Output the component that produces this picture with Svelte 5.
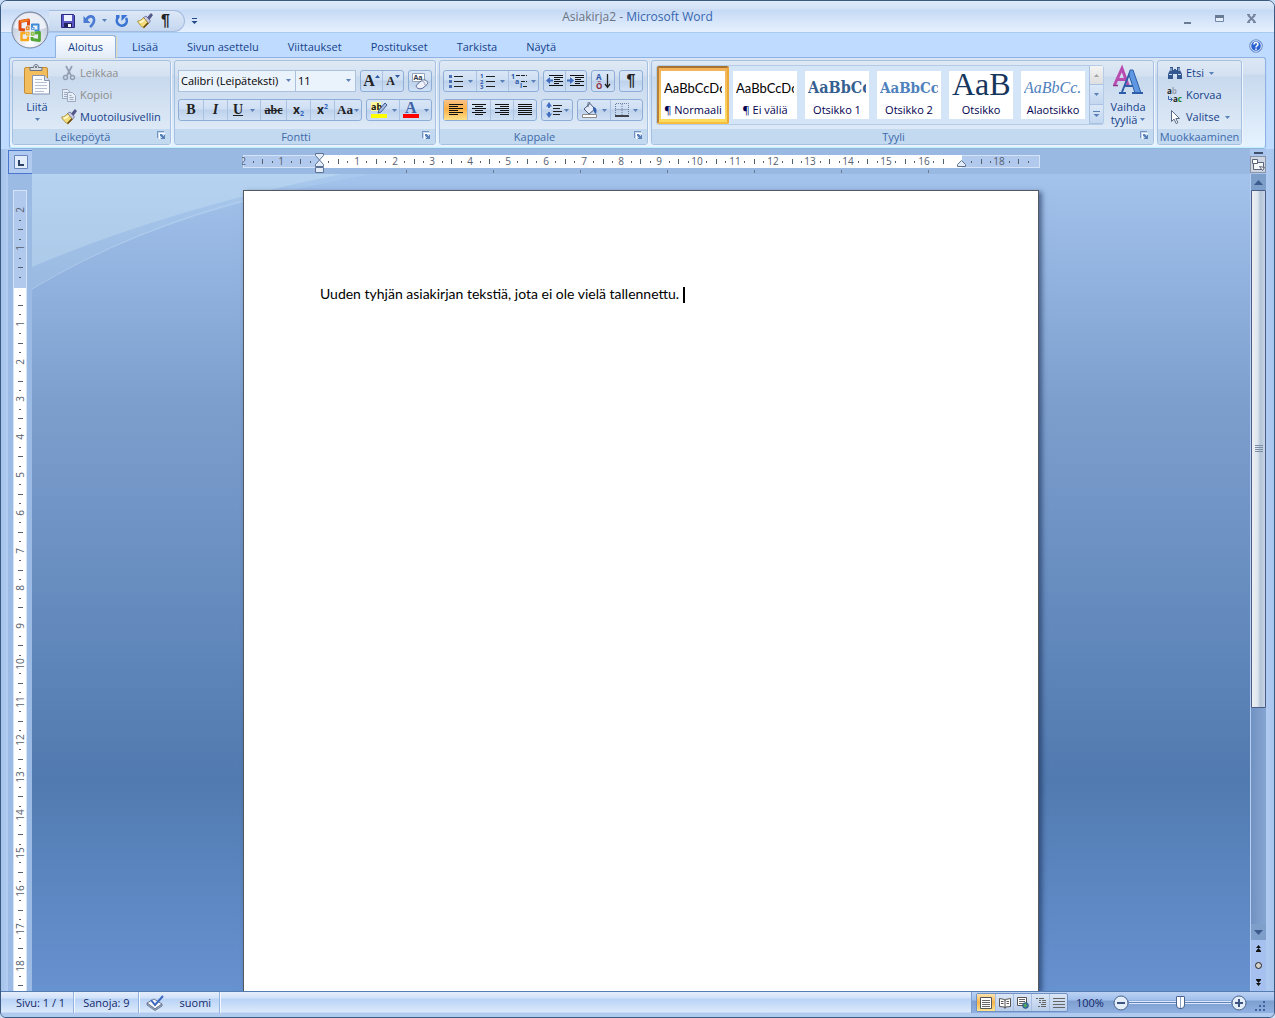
<script lang="ts">
	/**
	 * Word processor window
	 *
	 * Title bar, ribbon, rulers, document page and status bar.
	 * The page and the horizontal ruler stay centred in the workspace.
	 */

	interface Style {
		name: string;
		sample: string;
		kind: string;
	}

	// Constants
	const CM = 37.8; // one centimetre at 96 dpi
	const RULER_START = 77; // left margin on the horizontal ruler
	const RULER_TOP = 96; // top margin on the vertical ruler
	const TAB_STOP = 87;

	const tabs = ["Aloitus", "Lisää", "Sivun asettelu", "Viittaukset", "Postitukset", "Tarkista", "Näytä"];

	const styles: Style[] = [
		{ name: "¶ Normaali", sample: "AaBbCcDc", kind: "plain" },
		{ name: "¶ Ei väliä", sample: "AaBbCcDc", kind: "plain" },
		{ name: "Otsikko 1", sample: "AaBbCc", kind: "h1" },
		{ name: "Otsikko 2", sample: "AaBbCc", kind: "h2" },
		{ name: "Otsikko", sample: "AaB", kind: "title" },
		{ name: "Alaotsikko", sample: "AaBbCc.", kind: "subtitle" },
	];

	const views = ["print", "reading", "web", "outline", "draft"];

	// State
	let activeTab = $state("Aloitus");
	let activeStyle = $state("¶ Normaali");
	let activeView = $state("print");
	let align = $state("left");
	let zoom = $state(100);

	/**
	 * Quarter marks between two ruler positions, in centimetres
	 */
	function marks(from: number, to: number) {
		const list: { at: number; type: string }[] = [];
		for (let q = from * 4; q <= to * 4; q++) {
			if (q === 0) continue;
			const type = q % 4 === 0 ? "number" : q % 2 === 0 ? "half" : "dot";
			list.push({ at: q / 4, type });
		}
		return list;
	}

	const acrossMarks = marks(-2, 18.75).filter((m) => m.at < 16.75 || m.at > 17);
	const downMarks = marks(-2, 30);
	const tabStops = [1, 2, 3, 4, 5, 6, 7];
</script>

{#snippet caret()}
	<svg class="caret" width="5" height="3" viewBox="0 0 5 3"><path d="M0 0h5L2.500 3z" fill="#5a80b8" /></svg>
{/snippet}

{#snippet lines(rows: number[][])}
	<svg width="16" height="16" viewBox="0 0 16 16" shape-rendering="crispEdges">
		{#each rows as [x, w], i}
			<rect {x} y={2 + i * 2} width={w} height="1" fill="#111" />
		{/each}
	</svg>
{/snippet}

{#snippet launcher()}
	<button class="launcher" aria-label="Lisää asetuksia">
		<svg width="9" height="9" viewBox="0 0 9 9" shape-rendering="crispEdges">
			<path d="M2 8V2h6" fill="none" stroke="#fff" />
			<path d="M0 7V0h7v1H1v6z" fill="#7594c0" />
			<path d="M3 3h2v1h1v1h1V4h1v4H4V7h1V6H4V5H3z" fill="#5b80b5" />
		</svg>
	</button>
{/snippet}

{#snippet brush()}
	<svg width="16" height="16" viewBox="0 0 16 16">
		<path d="M10 5l4-4.500 1.500 1.500L12 7z" fill="#57598f" stroke="#2f3163" stroke-width=".6" />
		<path d="M6.500 4.500L9 3l4.500 5-2 2.500z" fill="#c9cbe4" stroke="#55588c" stroke-width=".7" />
		<path d="M6.500 4.500L11.500 10.500 7 15C4 13.500 2 11 .5 8 3 8 5 6.500 6.500 4.500z" fill="#f3dd7b" stroke="#9a7c22" stroke-width=".7" />
		<path d="M2 8.500c2 0 4-1 5-2.500l1 1C7 9 5 10 3 10z" fill="#fffbd4" />
		<path d="M7 15l4.500-4.500-1-1.200L6 14z" fill="#6b4b14" />
	</svg>
{/snippet}

<div class="window">
	<header class="titlebar">
		<button class="office" aria-label="Office-painike">
			<svg width="38" height="38" viewBox="0 0 38 38">
				<defs>
					<radialGradient id="orb" cx=".5" cy=".85" r=".9">
						<stop offset="0" stop-color="#fff" />
						<stop offset=".5" stop-color="#d4dbe8" />
						<stop offset="1" stop-color="#a9b3c6" />
					</radialGradient>
				</defs>
				<circle cx="19" cy="19" r="18" fill="url(#orb)" stroke="#76829a" />
				<path d="M3 17a16 15 0 0 1 32 0q-16 5-32 0z" fill="#f4f6fb" opacity=".85" />
				<g fill="none" stroke-linejoin="round">
					<path d="M17.500 14.500V9l-8.500 1.500v8l5 .5" stroke="#de4b12" stroke-width="3" />
					<path d="M9 10.500L17.500 9" stroke="#f08221" stroke-width="2" />
					<path d="M21 16v-2.500h6.500v6h-4" stroke="#3f8ad2" stroke-width="2" />
					<path d="M14.500 22h-4v7h6.500v-3.500" stroke="#f8a81c" stroke-width="2.400" />
					<path d="M24 22l4.500-.5v8L21 28.500V26" stroke="#55a735" stroke-width="2.800" />
					<path d="M15.500 16h2.500v2.500h-2.500z" stroke="#e98a2a" stroke-width="1.400" />
					<path d="M20.500 16.500H23v2h-2.500z" stroke="#5aa0de" stroke-width="1.200" />
					<path d="M15.500 21.500H18V24h-2.500z" stroke="#f5b93c" stroke-width="1.400" />
					<path d="M20.500 21.500H23V24h-2.500z" stroke="#8dc04a" stroke-width="1.400" />
				</g>
			</svg>
		</button>
		<div class="quick">
			<button aria-label="Tallenna">
				<svg width="14" height="14" viewBox="0 0 14 14">
					<path d="M.5.5h12l1 1v12H.5z" fill="#5a57c4" stroke="#2c2a80" />
					<rect x="3" y="1" width="8" height="6" fill="#eef2fc" />
					<rect x="3" y="9" width="8" height="4.500" fill="#23235c" />
					<rect x="7" y="10" width="3" height="3" fill="#fff" />
				</svg>
			</button>
			<button class="split" aria-label="Kumoa">
				<svg width="14" height="14" viewBox="0 0 14 14">
					<path d="M3 6.500C5 1.500 10 1 11 5c.6 3-1 5.500-4 8" fill="none" stroke="#4a7ad2" stroke-width="2.600" />
					<path d="M.5 2v7H7.500z" fill="#4a7ad2" />
				</svg>
				{@render caret()}
			</button>
			<button aria-label="Toista">
				<svg width="14" height="14" viewBox="0 0 14 14">
					<path d="M3 3.500a5 5 0 1 0 8 .5" fill="none" stroke="#3974d4" stroke-width="2.600" />
					<path d="M6.500 7V1H12.500z" fill="#3974d4" />
					<path d="M1 1h3.500v3H1z" fill="#3974d4" />
				</svg>
			</button>
			<button aria-label="Muotoilusivellin">{@render brush()}</button>
			<button class="pilcrow" aria-label="Näytä kaikki">¶</button>
		</div>
		<button class="customize" aria-label="Mukauta pikatyökaluriviä">
			<svg width="7" height="6" viewBox="0 0 7 6"><path d="M1 0h5v1H1zM.5 3h6l-3 3z" fill="#274a86" /></svg>
		</button>
		<h1>Asiakirja2 - <span>Microsoft Word</span></h1>
		<div class="controls">
			<button aria-label="Pienennä">
				<svg width="11" height="11" viewBox="0 0 11 11"><path d="M2 9h7v2H2z" fill="#687a94" /></svg>
			</button>
			<button aria-label="Suurenna">
				<svg width="11" height="11" viewBox="0 0 11 11"><path d="M1.500 2.500h8v6h-8z" fill="#e3edfb" stroke="#7388a8" /><path d="M1 2h9v3H1z" fill="#687a94" /></svg>
			</button>
			<button aria-label="Sulje">
				<svg width="11" height="11" viewBox="0 0 11 11"><path d="M2 2l7 7M9 2L2 9" stroke="#75859d" stroke-width="2" /><path d="M1 1.500h3M7 1.500h3M1 9.500h3M7 9.500h3" stroke="#75859d" /></svg>
			</button>
		</div>
	</header>

	<nav class="tabs">
		{#each tabs as tab}
			<button class:active={activeTab === tab} onclick={() => (activeTab = tab)}>{tab}</button>
		{/each}
		<button class="help" aria-label="Ohje">
			<svg width="14" height="14" viewBox="0 0 14 14">
				<circle cx="7" cy="7" r="6.300" fill="#2a62d4" stroke="#7f9cc9" />
				<circle cx="7" cy="7" r="5.300" fill="none" stroke="#e5efff" />
				<path d="M5 5.500C5 3 9 3 9 5.300 9 6.800 7 6.500 7 8.500M7 9.500v1.500" fill="none" stroke="#fff" stroke-width="1.500" />
			</svg>
		</button>
	</nav>

	<section class="ribbon">
		<div class="group clipboard">
			<div class="body">
				<button class="big">
					<svg width="28" height="32" viewBox="0 0 28 32">
						<rect x="1.500" y="3.500" width="23" height="26" rx="1.500" fill="#f2bd5d" stroke="#c58d37" />
						<path d="M7 6.500V3.500h3.500C10.500-.5 15.500-.5 15.500 3.500H19v3z" fill="#d8dce3" stroke="#6b7280" />
						<circle cx="13" cy="3" r="1" fill="#596270" />
						<path d="M9.500 11.500h12l5 5v13.500h-17z" fill="#fbfcff" stroke="#8593ad" />
						<path d="M21.500 11.500v5h5" fill="#d5deed" stroke="#8593ad" />
						<path d="M12 15.500h7M12 18.500h12M12 21.500h12M12 24.500h12M12 27.500h9" stroke="#b6c0d1" />
					</svg>
					<span>Liitä</span>
					{@render caret()}
				</button>
				<div class="stack">
					<button class="small" disabled>
						<svg width="16" height="16" viewBox="0 0 16 16" fill="none" stroke="#929fb2">
							<path d="M5 1l5 9.500M11 1L6 10.500" stroke-width="1.700" />
							<circle cx="4.500" cy="12.500" r="2" stroke-width="1.400" /><circle cx="11.500" cy="12.500" r="2" stroke-width="1.400" />
						</svg>
						Leikkaa
					</button>
					<button class="small" disabled>
						<svg width="16" height="16" viewBox="0 0 16 16" fill="#e8eef7" stroke="#9aa9c0">
							<path d="M1.500 2.500h5l3 3v6h-8zM3 5.500h3M3 7.500h4M3 9.500h3" />
							<path d="M6.500 5.500h5l3 3v6h-8zM8.500 8.500h2M8.500 10.500h4M8.500 12.500h4" />
						</svg>
						Kopioi
					</button>
					<button class="small">{@render brush()} Muotoilusivellin</button>
				</div>
			</div>
			<footer>Leikepöytä {@render launcher()}</footer>
		</div>

		<div class="group font">
			<div class="rows">
				<div class="row">
					<div class="combos">
						<label class="combo family">
							<select aria-label="Fontti"><option>Calibri (Leipäteksti)</option></select>
							{@render caret()}
						</label>
						<label class="combo size">
							<select aria-label="Fonttikoko"><option>11</option></select>
							{@render caret()}
						</label>
					</div>
					<div class="seg">
						<button class="glyph grow" aria-label="Suurenna fonttia">A<svg width="5" height="3" viewBox="0 0 5 3"><path d="M0 3h5L2.500 0z" fill="#2c58a5" /></svg></button>
						<button class="glyph shrink" aria-label="Pienennä fonttia">A<svg width="5" height="3" viewBox="0 0 5 3"><path d="M0 0h5L2.500 3z" fill="#2c58a5" /></svg></button>
					</div>
					<div class="seg">
						<button aria-label="Poista muotoilu">
							<svg width="18" height="18" viewBox="0 0 18 18">
								<path d="M1.500 1.500h12v8h-12z" fill="#fff" stroke="#93a4bf" />
								<text x="2.500" y="8" font-size="7" font-weight="700" fill="#333a4c">Aa</text>
								<path d="M5.500 13l5-4.500c3-2 8 1 5.500 4l-4 3.500c-3 2-8 0-6.500-3z" fill="#eef0fa" stroke="#596b94" />
								<path d="M10 9c3 0 4 2 4 4" fill="none" stroke="#9aa5c5" />
							</svg>
						</button>
					</div>
				</div>
				<div class="row">
					<div class="seg">
						<button class="glyph"><b>B</b></button>
						<button class="glyph"><i>I</i></button>
						<button class="glyph wide"><u>U</u>{@render caret()}</button>
						<button class="glyph strike"><s>abc</s></button>
						<button class="glyph script">x<sub>2</sub></button>
						<button class="glyph script">x<sup>2</sup></button>
						<button class="glyph case">Aa{@render caret()}</button>
					</div>
					<div class="seg">
						<button class="wide" aria-label="Korostusväri">
							<svg width="18" height="18" viewBox="0 0 18 18">
								<path d="M1 1h10v9H1z" fill="#fdf99b" />
								<text x="1" y="9" font-size="9" font-weight="700" fill="#111">ab</text>
								<path d="M15 2l2 2-6 7-3 1 1-3z" fill="#a8bde2" stroke="#3f5b92" />
								<path d="M1 13h16v4H1z" fill="#ff0" />
							</svg>
							{@render caret()}
						</button>
						<button class="wide" aria-label="Fontin väri">
							<svg width="18" height="18" viewBox="0 0 18 18">
								<text x="3" y="12" class="serif" font-size="16" font-weight="700" fill="#3d62a8">A</text>
								<path d="M1 13h16v4H1z" fill="#f00" />
							</svg>
							{@render caret()}
						</button>
					</div>
				</div>
			</div>
			<footer>Fontti {@render launcher()}</footer>
		</div>

		<div class="group paragraph">
			<div class="rows">
				<div class="row">
					<div class="seg">
						<button class="wide" aria-label="Luettelomerkit">
							<svg width="16" height="16" viewBox="0 0 16 16"><path d="M1 2h3v3H1zM1 7h3v3H1zM1 12h3v3H1z" fill="#4b6fb5" /><path d="M6 3.500h9M6 8.500h9M6 13.500h9" stroke="#222" /></svg>
							{@render caret()}
						</button>
						<button class="wide" aria-label="Numerointi">
							<svg width="16" height="16" viewBox="0 0 16 16"><g font-size="6" font-weight="700" fill="#2f58a8"><text x="0" y="5">1</text><text x="0" y="10.500">2</text><text x="0" y="15.500">3</text></g><path d="M6 3.500h9M6 8.500h9M6 13.500h9" stroke="#222" /></svg>
							{@render caret()}
						</button>
						<button class="wide tight" aria-label="Monitasoinen luettelo">
							<svg width="18" height="16" viewBox="0 0 18 16"><g font-size="7" font-weight="700" fill="#2f58a8"><text x="0" y="6">1</text><text x="4" y="11">a</text><text x="9" y="15">i</text></g><path d="M5 2.500h11M10 8.500h6M12 13.500h5" stroke="#222" stroke-dasharray="4 1" /></svg>
							{@render caret()}
						</button>
					</div>
					<div class="seg">
						{#each ["Pienennä sisennystä", "Suurenna sisennystä"] as label, i}
							<button class="indent" aria-label={label}>
								<svg width="18" height="16" viewBox="0 0 18 16">
									<path d="M3 2.500h14M8 4.500h9M8 6.500h6M8 8.500h9M8 10.500h5M3 12.500h14" stroke="#111" />
									<path d={i === 0 ? "M0 7.500L4 4v2.500h3v2H4V11z" : "M7 7.500L3 4v2.500H0v2h3V11z"} fill="#3f6cc0" />
								</svg>
							</button>
						{/each}
					</div>
					<div class="seg">
						<button aria-label="Lajittele">
							<svg width="16" height="18" viewBox="0 0 16 18"><text x="1" y="8" font-size="8" font-weight="700" fill="#2f58a8">A</text><text x="1" y="17" font-size="8" font-weight="700" fill="#8d2c3b">Ö</text><path d="M12.500 2v12M10 12l2.500 3.500L15 12" fill="none" stroke="#222" stroke-width="1.300" /></svg>
						</button>
					</div>
					<div class="seg"><button class="pilcrow">¶</button></div>
				</div>
				<div class="row">
					<div class="seg alignment">
						<button class:on={align === "left"} aria-label="Tasaa vasemmalle" onclick={() => (align = "left")}>{@render lines([[1, 14], [1, 9], [1, 14], [1, 9], [1, 14], [1, 9]])}</button>
						<button class:on={align === "center"} aria-label="Keskitä" onclick={() => (align = "center")}>{@render lines([[1, 14], [4, 8], [1, 14], [4, 8], [1, 14], [4, 8]])}</button>
						<button class:on={align === "right"} aria-label="Tasaa oikealle" onclick={() => (align = "right")}>{@render lines([[1, 14], [6, 9], [1, 14], [6, 9], [1, 14], [6, 9]])}</button>
						<button class:on={align === "justify"} aria-label="Tasaa molemmat reunat" onclick={() => (align = "justify")}>{@render lines([[1, 14], [1, 14], [1, 14], [1, 14], [1, 14], [1, 14]])}</button>
					</div>
					<div class="seg">
						<button class="wide tight" aria-label="Riviväli">
							<svg width="16" height="16" viewBox="0 0 16 16"><path d="M0 4.500L3 0l3 4.500H4V6H2V4.500zM0 11.500L3 16l3-4.500H4V10H2v1.500z" fill="#3f6cc0" /><path d="M7 3.500h9M7 6.500h7M7 9.500h9M7 12.500h7" stroke="#222" /></svg>
							{@render caret()}
						</button>
					</div>
					<div class="seg">
						<button class="wide" aria-label="Varjostus">
							<svg width="17" height="16" viewBox="0 0 17 16"><path d="M3 7l6-5.500L14 7l-6 5z" fill="#e4ebf8" stroke="#4a5a7c" /><path d="M12 5c4 0 4 4 3 7-2-1-2-3-3-5z" fill="#335fae" /><path d="M7 5V1.500C7-.5 9-.5 9 1.500" fill="none" stroke="#4a5a7c" /><path d="M1.500 12.500h14v3h-14z" fill="#fff" stroke="#8b8b8b" /></svg>
							{@render caret()}
						</button>
						<button class="wide" aria-label="Reunat">
							<svg width="14" height="14" viewBox="0 0 14 14" fill="none"><path d="M.5 12V.5h13V12M.5 6.500h13M7 1v11" stroke="#6c7fa0" stroke-dasharray="1 1" /><path d="M0 13h14" stroke="#111" stroke-width="1.500" /></svg>
							{@render caret()}
						</button>
					</div>
				</div>
			</div>
			<footer>Kappale {@render launcher()}</footer>
		</div>

		<div class="group style">
			<div class="body">
				<div class="gallery">
					{#each styles as style}
						<button class="card" class:selected={activeStyle === style.name} onclick={() => (activeStyle = style.name)}>
							<span class="face">
								<span class="sample {style.kind}">{style.sample}</span>
								<span class="name">{style.name}</span>
							</span>
						</button>
					{/each}
					<div class="scroll">
						<button class="off" aria-label="Edellinen rivi"><svg width="5" height="3" viewBox="0 0 5 3"><path d="M0 3h5L2.500 0z" fill="#a2a6ac" /></svg></button>
						<button aria-label="Seuraava rivi">{@render caret()}</button>
						<button aria-label="Lisää tyylejä"><svg width="7" height="6" viewBox="0 0 7 6"><path d="M0 0h7v1H0zM.5 3h6l-3 3z" fill="#5a80b8" /></svg></button>
					</div>
				</div>
				<button class="big change">
					<svg width="32" height="32" viewBox="0 0 32 32">
						<path d="M2.500 21L10 4.500 16 21M6 15.500h9" fill="none" stroke="#b94bb0" stroke-width="3" />
						<path d="M1 21.500h5M12 21.500h6" stroke="#8e3488" stroke-width="1.500" />
						<path d="M10 28L18 8M13 22h12" fill="none" stroke="#2e5ea9" stroke-width="2" />
						<path d="M18 6h3l8 23h-6l-6-18z" fill="#5f97e2" stroke="#2e5ea9" />
						<path d="M7 29h7M20 29h11" stroke="#2e5ea9" stroke-width="2" />
					</svg>
					<span>Vaihda</span>
					<span class="last">tyyliä {@render caret()}</span>
				</button>
			</div>
			<footer>Tyyli {@render launcher()}</footer>
		</div>

		<div class="group edit">
			<div class="stack">
				<button class="small">
					<svg width="16" height="16" viewBox="0 0 16 16"><path d="M3 2h3v3h1V4h2v1h1V2h3v3l2 4v5h-5v-5H6v5H1V9l2-4z" fill="#35578f" /><path d="M2 9.500h3M11 9.500h3M4 3v3M12 3v3" stroke="#c6d8f4" /></svg>
					Etsi {@render caret()}
				</button>
				<button class="small">
					<svg width="16" height="16" viewBox="0 0 16 16"><g font-size="8" font-weight="700"><text x="0" y="7" fill="#222">a<tspan fill="#9aa3b0">b</tspan></text><text x="6" y="15" fill="#222">a<tspan fill="#1c8a2c">c</tspan></text></g><path d="M1.500 9v3.500H5M3.500 10.500l2 2-2 2" fill="none" stroke="#3a64ad" /></svg>
					Korvaa
				</button>
				<button class="small">
					<svg width="16" height="16" viewBox="0 0 16 16"><path d="M4.500 1.500v11l2.600-2.400 2 4.400 1.800-.8-2-4.200h3.600z" fill="#fff" stroke="#5a6a85" /></svg>
					Valitse {@render caret()}
				</button>
			</div>
			<footer>Muokkaaminen</footer>
		</div>
	</section>

	<main class="workspace">
		<div class="corner">
			<button aria-label="Sarkainlaji"><svg width="14" height="14" viewBox="0 0 14 14"><path d="M.5.5h13v13H.5z" fill="#e2ecfa" stroke="#6686bd" /><path d="M5 5v5h5" fill="none" stroke="#2b4168" stroke-width="2" /></svg></button>
		</div>

		<div class="ruler-row">
			<svg class="ruler" width="798" height="24" viewBox="0 0 798 24">
				<rect x="1.500" y="5.500" width="796" height="12" fill="#b1c9ed" stroke="#d5e3f8" />
				<rect x={RULER_START} y="5" width="643" height="13" fill="#fff" />
				{#each acrossMarks as mark}
					{@const x = Math.round(RULER_START + mark.at * CM)}
					{#if mark.type === "number"}
						<text {x} y="15" text-anchor="middle">{Math.abs(mark.at)}</text>
					{:else if mark.type === "half"}
						<rect {x} y="9" width="1" height="5" />
					{:else}
						<rect {x} y="11" width="1" height="2" />
					{/if}
				{/each}
				{#each tabStops as stop}
					<rect x={RULER_START + stop * TAB_STOP} y="20" width="1" height="3" opacity=".7" />
				{/each}
				<g fill="#e4ecf7" stroke="#5c7396">
					<path d="M73.500 3.500h8v2L77.500 10l-4-4.500zM73.500 16.500v-2l4-4.500 4 4.500v2zM73.500 17.500h8v5h-8z" />
					<path d="M715.500 16.500v-2l4-4 4 4v2z" />
				</g>
			</svg>
		</div>

		<div class="split-box">
			<span></span>
			<button aria-label="Viivain">
				<svg width="14" height="14" viewBox="0 0 14 14"><path d="M2.500 4.500h10v7h-10z" fill="#f5f6f8" stroke="#5a6377" /><path d="M1.500 1.500h5v4h-5zM8.500 8.500l3 4 2-3z" fill="#fff" stroke="#5a6377" /></svg>
			</button>
		</div>

		<div class="ruler-column">
			<svg width="14" height="802" viewBox="0 0 14 802">
				<rect x=".5" y=".5" width="13" height="810" fill="#b1c9ed" stroke="#d5e3f8" />
				<rect x="1" y="98" width="12" height="720" fill="#fff" />
				{#each downMarks as mark}
					{@const y = Math.round(RULER_TOP + mark.at * CM)}
					{#if mark.type === "number"}
						<text transform="translate(11 {y}) rotate(-90)" text-anchor="middle">{Math.abs(mark.at)}</text>
					{:else if mark.type === "half"}
						<rect x="5" {y} width="5" height="1" />
					{:else}
						<rect x="6" {y} width="2" height="1" />
					{/if}
				{/each}
			</svg>
		</div>

		<div class="desk">
			<svg class="swoosh" width="420" height="120" viewBox="0 0 420 120">
				<path d="M0 0h310Q140 34 0 93z" fill="#d3eaf8" opacity=".4" />
				<path d="M0 93Q140 34 310 0h30Q120 40 0 115z" fill="#c0dcf2" opacity=".22" />
				<path d="M0 115Q100 55 225 23" fill="none" stroke="#c6dcf6" opacity=".5" />
			</svg>
			<div class="page" contenteditable="true" role="textbox" tabindex="0" aria-label="Asiakirja">
				<p>Uuden tyhjän asiakirjan tekstiä, jota ei ole vielä tallennettu. <span class="cursor"></span></p>
			</div>
		</div>

		<div class="scrollbar">
			<button class="arrow" aria-label="Ylös"><svg width="9" height="5" viewBox="0 0 9 5"><path d="M0 5h9L4.500 0z" fill="#3e5b8d" /></svg></button>
			<div class="track">
				<div class="thumb"><svg width="8" height="8" viewBox="0 0 8 8"><path d="M0 .5h8M0 2.500h8M0 4.500h8M0 6.500h8" stroke="#7d8da3" /></svg></div>
				<div class="rest"></div>
			</div>
			<button class="arrow" aria-label="Alas"><svg width="9" height="5" viewBox="0 0 9 5"><path d="M0 0h9L4.500 5z" fill="#3e5b8d" /></svg></button>
			<div class="browse">
				<button aria-label="Edellinen sivu"><svg width="7" height="7" viewBox="0 0 7 7"><path d="M1 3h5L3.500 0zM1 6h5L3.500 3zM1 6h5v1H1z" fill="#111" /></svg></button>
				<button aria-label="Valitse selauskohde"><svg width="7" height="7" viewBox="0 0 7 7"><circle cx="3.500" cy="3.500" r="3" fill="#d3d1c8" stroke="#222" /></svg></button>
				<button aria-label="Seuraava sivu"><svg width="7" height="7" viewBox="0 0 7 7"><path d="M1 4h5L3.500 7zM1 1h5L3.500 4zM1 0h5v1H1z" fill="#111" /></svg></button>
			</div>
		</div>
	</main>

	<footer class="status">
		<button>Sivu: 1 / 1</button>
		<button>Sanoja: 9</button>
		<button class="proof" aria-label="Oikoluku">
			<svg width="18" height="16" viewBox="0 0 18 16"><path d="M1 8l7-4 8 5-7 5z" fill="#f4f6fa" stroke="#6d7b96" /><path d="M1 8v2l8 5.500 7-4.500V9l-7 5z" fill="#aab4c6" stroke="#6d7b96" /><path d="M5 5l4 5 8-9" fill="none" stroke="#3c69bf" stroke-width="2" /></svg>
		</button>
		<button class="lang">suomi</button>
		<div class="right">
			<div class="views">
				{#each views as view}
					<button class:on={activeView === view} aria-label={view} onclick={() => (activeView = view)}>
						<svg width="12" height="12" viewBox="0 0 12 12" fill="none">
							{#if view === "print"}
								<path d="M.5.5h11v11H.5z" fill="#fff" stroke="#555" /><path d="M2 3.500h8M2 5.500h8M2 7.500h8M2 9.500h8" stroke="#666" />
							{:else if view === "reading"}
								<path d="M.5 1.500l5 1 .5 1 .5-1 5-1v8l-5 .5-.5 1.500-.5-1.500-5-.5z" fill="#fff" stroke="#555" /><path d="M6 3v8M2 4.500h2.500M2 6.500h2.500M7.500 4.500H10M7.500 6.500H10" stroke="#555" />
							{:else if view === "web"}
								<path d="M.5.5h9v8h-9z" fill="#fff" stroke="#555" /><path d="M2 2.500h6M2 4.500h6M2 6.500h4" stroke="#666" /><circle cx="8.500" cy="8.500" r="3" fill="#3776a4" stroke="#245" stroke-width=".5" /><path d="M6.500 8l2-1.500 1.500 2-2 2z" fill="#58ad4c" />
							{:else if view === "outline"}
								<path d="M1 1.500h2M4 1.500h5M4 3.500h2M7 3.500h4M4 5.500h2M7 5.500h4M6 7.500h5M3 9.500h2M6 9.500h5" stroke="#666" />
							{:else}
								<path d="M0 1.500h12M0 4.500h12M0 7.500h12M0 10.500h12" stroke="#666" />
							{/if}
						</svg>
					</button>
				{/each}
			</div>
			<output>{zoom}%</output>
			<button class="round" aria-label="Loitonna" onclick={() => (zoom = Math.max(10, zoom - 10))}>
				<svg width="16" height="16" viewBox="0 0 16 16"><circle cx="8" cy="8" r="7" fill="#e4edfa" stroke="#4a628c" /><path d="M4 8h8" stroke="#3b5480" stroke-width="2" /></svg>
			</button>
			<input type="range" min="10" max="190" bind:value={zoom} aria-label="Zoomaus" />
			<button class="round" aria-label="Lähennä" onclick={() => (zoom = Math.min(190, zoom + 10))}>
				<svg width="16" height="16" viewBox="0 0 16 16"><circle cx="8" cy="8" r="7" fill="#e4edfa" stroke="#4a628c" /><path d="M4 8h8M8 4v8" stroke="#3b5480" stroke-width="2" /></svg>
			</button>
			<svg class="grip" width="12" height="12" viewBox="0 0 12 12"><path d="M8 0h2v2H8zM4 4h2v2H4zM8 4h2v2H8zM0 8h2v2H0zM4 8h2v2H4zM8 8h2v2H8z" fill="#3d649f" /></svg>
		</div>
	</footer>
</div>

<style>
	:global(body) {
		margin: 0;
		background: #c9dcf4;
	}

	.window {
		--ink: #15428b;
		--edge: #3b5a82;
		box-sizing: border-box;
		display: flex;
		flex-direction: column;
		height: 100vh;
		overflow: hidden;
		border: 1px solid var(--edge);
		border-radius: 7px 7px 6px 6px;
		background: #bfdbff;
		color: var(--ink);
		font: 11px/14px "Open Sans", "Noto Sans", sans-serif;
	}

	.window * {
		box-sizing: border-box;
	}

	button {
		display: flex;
		align-items: center;
		justify-content: center;
		margin: 0;
		padding: 0;
		border: 0;
		background: none;
		color: inherit;
		font: inherit;
	}

	svg {
		display: block;
		flex: none;
	}

	/* Title bar */
	.titlebar {
		position: relative;
		display: flex;
		align-items: center;
		flex: none;
		height: 32px;
		padding: 0 8px 0 48px;
		border-bottom: 1px solid #a9cbf2;
		background: linear-gradient(#dfeafa 0, #d3e1f6 8px, #c6daf5 9px, #e6f0fe 100%);
	}

	.office {
		position: absolute;
		top: 10px;
		left: 10px;
		z-index: 1;
	}

	.quick {
		display: flex;
		align-items: center;
		gap: 8px;
		height: 22px;
		margin-top: 8px;
		padding: 0 14px 0 12px;
		border: 1px solid #a3bce0;
		border-left: 0;
		border-radius: 0 11px 11px 0;
		background: linear-gradient(#dde8f7, #c5d7ef);
	}

	.quick .split {
		gap: 5px;
	}

	.pilcrow {
		color: #222;
		font: 700 16px/16px "Liberation Sans", sans-serif;
	}

	.customize {
		margin: 8px 0 0 6px;
	}

	h1 {
		position: absolute;
		inset: 9px 0 auto;
		margin: 0;
		color: #6b7280;
		font: inherit;
		font-size: 12px;
		text-align: center;
		pointer-events: none;
	}

	h1 span {
		color: #3566b0;
	}

	.controls {
		display: flex;
		gap: 21px;
		margin: 4px 9px 0 auto;
	}

	/* Tabs */
	.tabs {
		display: flex;
		align-items: flex-end;
		flex: none;
		gap: 3px;
		height: 24px;
		padding: 0 11px 0 54px;
	}

	.tabs button {
		height: 22px;
		padding: 0 12px;
		border: 1px solid transparent;
		border-bottom: 0;
		border-radius: 3px 3px 0 0;
	}

	.tabs .active {
		z-index: 1;
		height: 23px;
		margin-bottom: -1px;
		border-color: #8db2e3;
		background: linear-gradient(#fbfdff, #e3ecf8);
		box-shadow: 1px 0 2px #e8d9a5;
	}

	.tabs .help {
		height: 23px;
		margin-left: auto;
		padding: 0;
		border: 0;
	}

	/* Ribbon */
	.ribbon {
		display: flex;
		flex: none;
		gap: 3px;
		height: 91px;
		margin: 0 8px 1px;
		padding: 2px;
		border: 1px solid #8db2e3;
		border-bottom-color: #c0f2fc;
		border-radius: 3px;
		background: linear-gradient(#dce7f5 0, #d3e0f1 16px, #c8d9ee 17px, #e6f3ff 100%);
		box-shadow: 0 1px 1px #8fb0dc;
	}

	.group {
		display: flex;
		flex-direction: column;
		flex: none;
		height: 85px;
		overflow: hidden;
		border: 1px solid #a5c0e0;
		border-radius: 3px;
		background: linear-gradient(#dfe9f5 0, #d4e1f1 15px, #c8d9ed 16px, #dde9f6 68px);
		box-shadow: 1px 1px 0 #eef5fd;
	}

	.clipboard { width: 159px; }
	.font { width: 262px; }
	.paragraph { width: 209px; }
	.style { width: 503px; }
	.edit { width: 85px; }

	.group > footer {
		position: relative;
		display: flex;
		align-items: center;
		justify-content: center;
		height: 15px;
		margin-top: auto;
		padding-right: 18px;
		background: #c2d9f0;
		color: #3e6aaa;
	}

	.edit > footer {
		padding: 0;
	}

	.launcher {
		position: absolute;
		top: 2px;
		right: 4px;
	}

	.body {
		display: flex;
		flex: 1;
	}

	.big {
		flex-direction: column;
		justify-content: flex-start;
		width: 48px;
		padding-top: 3px;
	}

	.big svg + span {
		padding-top: 4px;
	}

	.big .caret {
		margin-top: 4px;
	}

	.stack {
		display: flex;
		flex-direction: column;
		padding-top: 1px;
	}

	.small {
		justify-content: flex-start;
		gap: 3px;
		height: 22px;
	}

	.small:disabled {
		color: #8d8d8d;
	}

	.small .caret {
		margin-left: 2px;
	}

	.edit .stack {
		padding-left: 9px;
	}

	.rows {
		display: flex;
		flex-direction: column;
		gap: 7px;
		padding: 9px 3px 0;
	}

	.row {
		display: flex;
		gap: 4px;
	}

	.combos,
	.seg {
		display: flex;
		flex: none;
		height: 22px;
	}

	.combo {
		position: relative;
		display: flex;
		height: 22px;
	}

	.combo + .combo {
		margin-left: -1px;
	}

	.family { width: 118px; }
	.size { width: 61px; }

	.combo select {
		width: 100%;
		padding: 0 2px;
		border: 1px solid #abc1de;
		border-radius: 0;
		appearance: none;
		background: #eaf2fb;
		color: #000;
		font: inherit;
	}

	.combo .caret {
		position: absolute;
		top: 9px;
		right: 5px;
		pointer-events: none;
	}

	.seg {
		border: 1px solid #8eaed8;
		border-radius: 3px;
		background: linear-gradient(#d9e6f6 0, #cfdff3 9px, #bdd1eb 10px, #d0e1f5 100%);
	}

	.seg button {
		gap: 4px;
		width: 22px;
	}

	.seg button + button {
		border-left: 1px solid #a9c2e3;
	}

	.alignment button { width: 23px; }
	.seg .indent { width: 21px; }
	.seg .wide { width: 32px; }
	.seg .tight { width: 30px; gap: 2px; }
	.seg .on { background: linear-gradient(#f9c184, #fbb045 45%, #fde08a); }

	.glyph {
		color: #222;
		font: 700 14px/16px "Liberation Serif", serif;
	}

	.seg .glyph { width: 24px; }
	.seg .glyph.wide { width: 33px; gap: 7px; }
	.seg .strike { width: 26px; font-size: 12px; }
	.seg .script { gap: 0; font: 700 12px/16px "Open Sans", sans-serif; }
	.seg .case { width: 27px; gap: 1px; font-size: 13px; }
	.seg .grow,
	.seg .shrink { width: 21px; gap: 0; }
	.seg .grow { font-size: 16px; }
	.seg .shrink { font-size: 12px; }
	.grow svg,
	.shrink svg { align-self: flex-start; margin-top: 4px; }

	.script sub,
	.script sup {
		color: #2f63bd;
		font-size: 7px;
		line-height: 7px;
	}

	.script sub { align-self: flex-end; margin-bottom: 3px; }
	.script sup { align-self: flex-start; margin-top: 3px; }

	.serif {
		font-family: "Liberation Serif", serif;
	}

	/* Style gallery */
	.gallery {
		display: flex;
		height: 60px;
		margin: 4px 0 0 4px;
		border: 1px solid #b5cce9;
		border-radius: 3px;
		background: #d4e5f7;
	}

	.card {
		width: 72px;
		height: 58px;
		padding: 1px;
		border: 0;
	}

	.card.selected {
		border: 2px solid #c8862b;
		border-color: #a87331 #eda83a #f5be3c #b8813a;
		border-radius: 2px;
		background: linear-gradient(#f3b25b, #fcdc5e);
	}

	.face {
		display: flex;
		flex-direction: column;
		width: 64px;
		height: 48px;
		padding: 0 3px;
		background: #fff;
	}

	.sample {
		height: 32px;
		overflow: hidden;
		color: #000;
		line-height: 34px;
		text-align: left;
		white-space: nowrap;
	}

	.sample.plain { font-family: Lato, sans-serif; font-size: 13px; }
	.sample.h1 { color: #365f91; font: 700 16px/34px "DejaVu Serif Condensed", "DejaVu Serif", serif; }
	.sample.h2 { color: #4f81bd; font: 700 15px/34px "DejaVu Serif Condensed", "DejaVu Serif", serif; }
	.sample.title { color: #17365d; font: 32px/26px "Liberation Serif", serif; }
	.sample.subtitle { color: #4f81bd; font: italic 16px/34px "Liberation Serif", serif; }

	.name {
		color: #000050;
		text-align: center;
		white-space: nowrap;
	}

	.scroll {
		display: flex;
		flex-direction: column;
		width: 14px;
	}

	.scroll button {
		flex: 1;
		border: 1px solid #a9c2e3;
		border-width: 0 0 1px 1px;
		background: linear-gradient(#dbe8f8, #c3d7f0);
	}

	.scroll .off {
		background: linear-gradient(#f4f4f4, #dedede);
	}

	.change .last {
		display: flex;
		gap: 3px;
		line-height: 12px;
	}

	/* Workspace */
	.workspace {
		display: grid;
		grid-template: 25px 1fr / 24px 1fr 16px;
		flex: 1;
		min-height: 0;
		padding: 0 8px 0 7px;
		background: linear-gradient(90deg, #a5c2ea, #b3cdf2 7px, #b3cdf2 99%, #a9c6ef);
	}

	.corner {
		display: flex;
		align-items: center;
		justify-content: center;
		width: 25px;
		margin-top: 1px;
		border: 1px solid #4a77cd;
		background: #b1cbf0;
	}

	.ruler-row {
		display: flex;
		align-items: flex-end;
		justify-content: center;
		background: #9ab9e2;
	}

	.ruler,
	.ruler-column svg {
		fill: #55606f;
		font-size: 10px;
	}

	.split-box {
		display: flex;
		flex-direction: column;
		align-items: center;
		gap: 2px;
		padding-top: 3px;
		background: #a9c5ee;
	}

	.split-box span {
		width: 9px;
		height: 2px;
		background: #3f4f6c;
	}

	.split-box button {
		width: 16px;
		height: 17px;
		border: 1px solid #8a94a6;
		background: #cfd6e2;
	}

	.ruler-column {
		overflow: hidden;
		padding: 16px 0 0 5px;
		background: #9bbae4;
	}

	.desk {
		position: relative;
		display: flex;
		justify-content: center;
		overflow: hidden;
		padding-top: 16px;
		background: linear-gradient(#a3c3ec 0, #7d9fce 28%, #517ab0 74%, #6792d0 100%);
	}

	.swoosh {
		position: absolute;
		top: 0;
		left: 0;
	}

	.page {
		position: relative;
		width: 796px;
		padding: 94px 76px;
		border: 1px solid #55595f;
		border-bottom: 0;
		outline: none;
		background: #fff;
		box-shadow: 3px 2px 5px rgba(20, 40, 80, 0.6);
		color: #000;
		font: 14px/18px Lato, sans-serif;
	}

	.page p {
		margin: 0;
	}

	.cursor {
		display: inline-block;
		width: 2px;
		height: 16px;
		background: #000;
		vertical-align: middle;
	}

	.scrollbar {
		display: flex;
		flex-direction: column;
		border-left: 1px solid #b5cef2;
		background: #a6c1f0;
	}

	.arrow {
		flex: none;
		height: 16px;
		background: #7f9fcb;
	}

	.track {
		display: flex;
		flex-direction: column;
		flex: 1;
		background: linear-gradient(90deg, #7192c2, #86a4d0);
	}

	.thumb {
		display: flex;
		align-items: center;
		justify-content: center;
		flex: 517;
		border: 1px solid #4d5c86;
		border-radius: 1px;
		background: linear-gradient(90deg, #eceff1 0, #dfe7ee 40%, #b5c6d8 65%, #c7d5e6 100%);
	}

	.rest {
		flex: 216;
	}

	.browse {
		display: flex;
		flex-direction: column;
		height: 51px;
	}

	.browse button {
		flex: 1;
	}

	/* Status bar */
	.status {
		display: flex;
		flex: none;
		height: 26px;
		padding-left: 6px;
		border-top: 1px solid #567db1;
		background: linear-gradient(#e4eefc 0, #d2e2f9 6px, #b9d3f6 7px, #dbe9fb 20px, #b1cbef 21px);
	}

	.status > button {
		height: 21px;
		padding: 0 8px 0 9px;
		border-right: 1px solid #93b2de;
		box-shadow: 1px 0 0 #f3f8ff;
		color: #14286a;
	}

	.status .proof {
		padding: 0 7px;
		border: 0;
		box-shadow: none;
	}

	.right {
		display: flex;
		align-items: center;
		height: 21px;
		margin-left: auto;
		padding: 0 7px 0 4px;
		border-left: 1px solid #7f9fd0;
		background: linear-gradient(#bcd2f4, #a0bfeb 8px, #7d9fd0 9px, #8fb0e0);
	}

	.views {
		display: flex;
		height: 19px;
		margin-right: 8px;
		border: 1px solid #6f90c2;
		border-radius: 2px;
		background: linear-gradient(#dbe6f5, #b9cdea);
	}

	.views button {
		width: 18px;
	}

	.views button + button {
		border-left: 1px solid #a6bfe2;
	}

	.views .on {
		background: linear-gradient(#fce2b0, #f9b64b 50%, #fde591);
	}

	.right output {
		width: 37px;
		color: #14286a;
	}

	.right input {
		width: 102px;
		height: 16px;
		margin: 0;
		appearance: none;
		background: linear-gradient(#5f83b8, #5f83b8) center / 100% 1px no-repeat, linear-gradient(#dce9fb, #dce9fb) center / 100% 3px no-repeat;
	}

	.right input::-webkit-slider-thumb {
		width: 9px;
		height: 13px;
		border: 1px solid #4a628c;
		border-radius: 1px 1px 4px 4px;
		appearance: none;
		background: linear-gradient(90deg, #fff 3px, #8aa2c8 3px, #8aa2c8 4px, #fff 4px);
	}

	.grip {
		align-self: flex-end;
		margin-left: 8px;
	}
</style>
